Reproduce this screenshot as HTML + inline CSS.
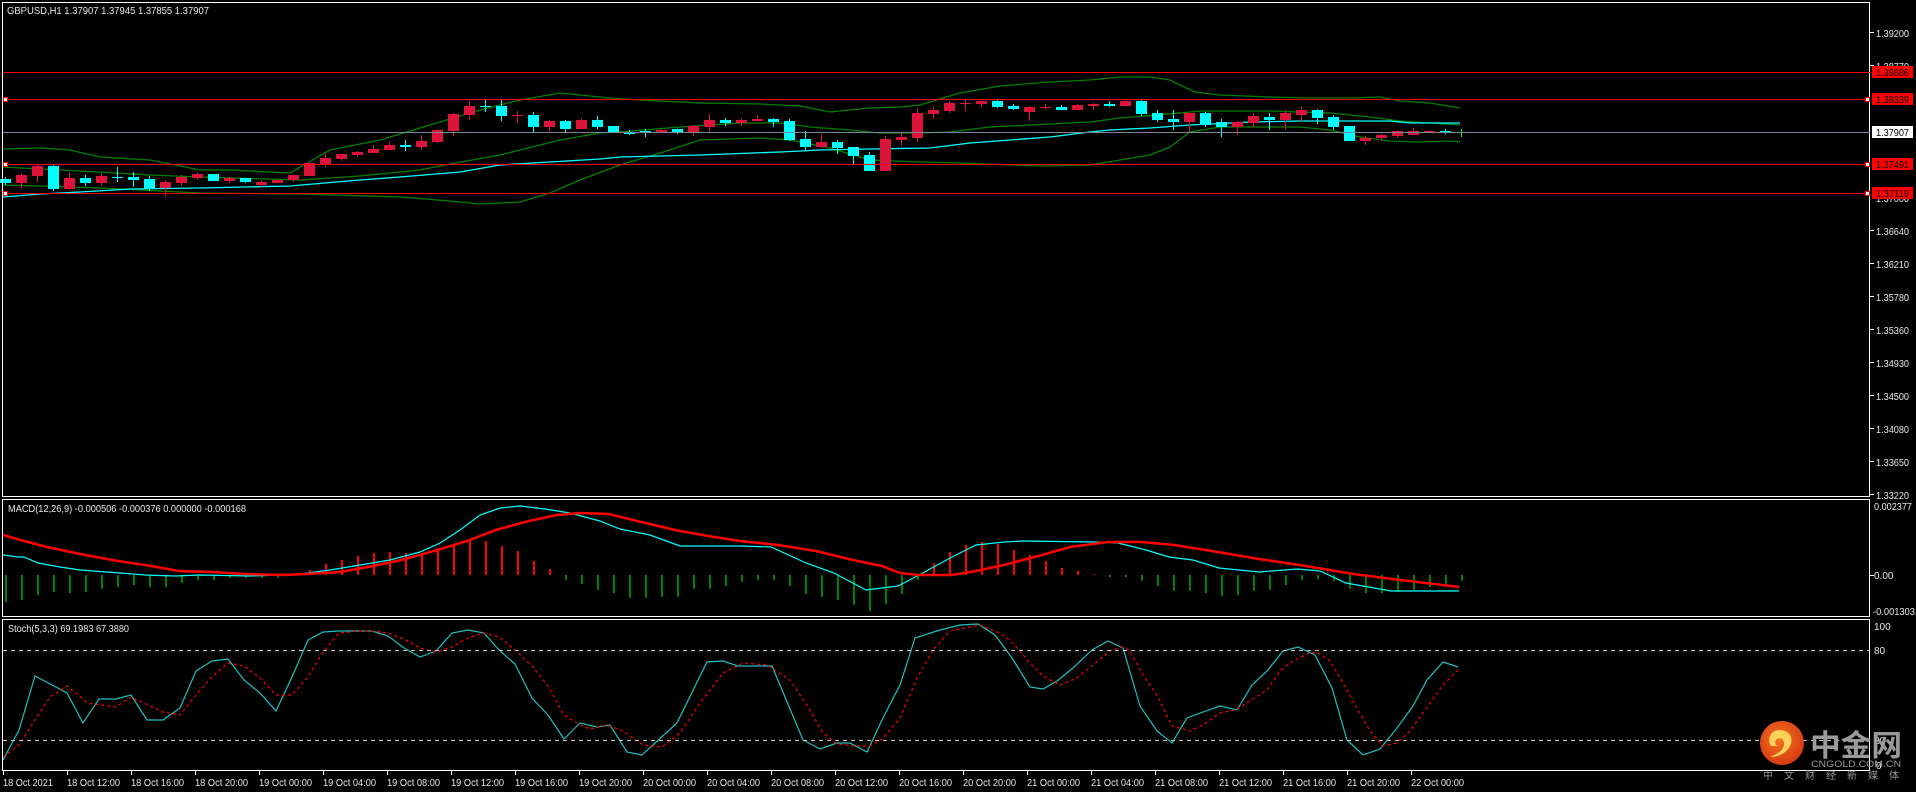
<!DOCTYPE html>
<html><head><meta charset="utf-8"><style>
html,body{margin:0;padding:0;background:#000;width:1916px;height:792px;overflow:hidden}
svg{display:block}
text{font-family:"Liberation Sans",Tahoma,sans-serif;font-size:10px;fill:#e8e8e8}
</style></head><body>
<svg id="s" width="1916" height="792" xmlns="http://www.w3.org/2000/svg">
<rect width="1916" height="792" fill="#000"/>
<g id="dyn"></g>
<g fill="none" stroke="#fff" stroke-width="1">
<rect x="2.5" y="2.5" width="1867" height="494"/>
<rect x="2.5" y="499.5" width="1867" height="117"/>
<rect x="2.5" y="619.5" width="1867" height="151"/>
</g>
<line x1="3" y1="72.5" x2="1870" y2="72.5" stroke="#ff0000"/>
<line x1="3" y1="99.5" x2="1870" y2="99.5" stroke="#ff0000"/>
<line x1="3" y1="132.5" x2="1870" y2="132.5" stroke="#778899"/>
<line x1="3" y1="164.5" x2="1870" y2="164.5" stroke="#ff0000"/>
<line x1="3" y1="193.5" x2="1870" y2="193.5" stroke="#ff0000"/>
<g fill="#fff" stroke="#ff0000"><rect x="3.5" y="97.5" width="4" height="4"/><rect x="3.5" y="162.5" width="4" height="4"/><rect x="3.5" y="191.5" width="4" height="4"/>
<rect x="1865.5" y="97.5" width="4" height="4"/><rect x="1865.5" y="162.5" width="4" height="4"/><rect x="1865.5" y="191.5" width="4" height="4"/></g>
<line x1="3" y1="650.5" x2="1870" y2="650.5" stroke="#c8c8c8" stroke-dasharray="4,4"/>
<line x1="3" y1="740.5" x2="1870" y2="740.5" stroke="#c8c8c8" stroke-dasharray="4,4"/>
<text x="7" y="14" textLength="202" lengthAdjust="spacingAndGlyphs">GBPUSD,H1  1.37907 1.37945 1.37855 1.37907</text>
<text x="8" y="512" textLength="238" lengthAdjust="spacingAndGlyphs">MACD(12,26,9) -0.000506 -0.000376 0.000000 -0.000168</text>
<text x="8" y="632" textLength="121" lengthAdjust="spacingAndGlyphs">Stoch(5,3,3) 69.1983 67.3880</text>
<g stroke="#fff"><line x1="1870" y1="32.5" x2="1874" y2="32.5"/><line x1="1870" y1="65.5" x2="1874" y2="65.5"/><line x1="1870" y1="230.5" x2="1874" y2="230.5"/><line x1="1870" y1="263.5" x2="1874" y2="263.5"/><line x1="1870" y1="296.5" x2="1874" y2="296.5"/><line x1="1870" y1="329.5" x2="1874" y2="329.5"/><line x1="1870" y1="362.5" x2="1874" y2="362.5"/><line x1="1870" y1="395.5" x2="1874" y2="395.5"/><line x1="1870" y1="428.5" x2="1874" y2="428.5"/><line x1="1870" y1="461.5" x2="1874" y2="461.5"/><line x1="1870" y1="494.5" x2="1874" y2="494.5"/><line x1="1870" y1="575.5" x2="1874" y2="575.5"/></g>
<g id="pax"></g>
<rect x="1872" y="66" width="41" height="12" fill="#ff0000"/>
<rect x="1872" y="93" width="41" height="12" fill="#ff0000"/>
<rect x="1872" y="126" width="41" height="12" fill="#fff"/>
<rect x="1872" y="158" width="41" height="12" fill="#ff0000"/>
<rect x="1872" y="187" width="41" height="12" fill="#ff0000"/>
<g id="pbox"></g>
<text x="1874" y="510" textLength="38" lengthAdjust="spacingAndGlyphs">0.002377</text><text x="1874" y="579">0.00</text><text x="1873" y="615" textLength="42" lengthAdjust="spacingAndGlyphs">-0.001303</text>
<text x="1874" y="630">100</text><text x="1874" y="654">80</text><text x="1874" y="744">20</text><text x="1876" y="769">0</text>
<g id="time"></g>
<defs><radialGradient id="lg" cx="0.45" cy="0.4" r="0.6"><stop offset="0" stop-color="#f5761e"/><stop offset="1" stop-color="#d63a14"/></radialGradient></defs>
<circle cx="1782" cy="743" r="22" fill="url(#lg)"/>
<path d="M1771 746 C1766 738 1772 729 1781 730 C1790 731 1794 739 1790 746 C1787 752 1780 757 1770 757 C1779 753 1783 750 1784 745 C1785 740 1781 737 1777 739 C1774 741 1775 745 1778 746 Z" fill="#fcd35a"/>
<text x="1810" y="756" textLength="92" lengthAdjust="spacingAndGlyphs" style="font-family:'Noto Sans CJK SC',sans-serif;font-size:30px;font-weight:bold;fill:#9a9a9a">中金网</text>
<text x="1811" y="767" textLength="90" lengthAdjust="spacingAndGlyphs" style="font-size:9px;fill:#9a9a9a">CNGOLD.COM.CN</text>
<text x="1763" y="779" textLength="136" lengthAdjust="spacing" style="font-family:'Noto Sans CJK SC',sans-serif;font-size:10px;fill:#9a9a9a">中文财经新媒体</text>
</svg>
<script>
var g=document.getElementById("dyn"),h="";
function pl(pts,col,w,extra){h+='<polyline fill="none" stroke="'+col+'" stroke-width="'+w+'" '+(extra||'')+' points="'+pts+'"/>';}
pl("3,149 40,148 70,150 100,157 150,160 200,170 230,170 290,173 330,150 380,140 430,125 480,110 520,100 560,93 610,98 640,100 700,103 760,104 800,106 830,112 870,108 900,107 920,105 940,99 960,93 1000,86 1050,82 1090,80 1120,77 1150,77 1170,80 1180,85 1195,92 1220,95 1270,97 1310,98 1350,98 1380,97 1400,101 1430,103 1460,108","#008000",1.3);
pl("3,167 40,169 80,171 150,175 200,177 300,180 360,176 420,170 450,164 500,155 560,140 600,133 620,132 680,127 740,123 780,123 810,127 850,130 880,133 920,133 950,132 990,127 1050,124 1090,122 1120,118 1180,113 1200,111 1270,111 1330,113 1370,117 1400,121 1430,123 1460,125","#008000",1.3);
pl("3,185 40,186 100,188 200,193 300,194 400,197 450,201 480,204 520,202 550,193 580,180 620,165 660,153 700,140 760,138 790,140 830,148 870,160 920,162 960,163 1040,166 1090,165 1120,160 1150,155 1170,147 1190,132 1220,127 1300,127 1330,130 1360,137 1390,141 1420,142 1450,141 1460,142","#008000",1.3);
pl("3,197 40,194 80,192 130,189 200,188 290,186 360,180 400,177 460,172 500,165 550,162 600,159 620,157 700,155 780,152 820,150 870,149 930,148 970,143 1010,140 1050,137 1090,132 1110,130 1150,128 1190,125 1250,122 1300,121 1390,121 1410,123 1460,123","#00ffff",1.3);
var C=[[179,183,'c'],[175,183,'r',173,189],[166,176,'r',164,182],[166,189,'c',164,191],[178,189,'r',172,190],[178,183,'c',175,186],[176,183,'r',173,186],[177,177,'c',167,182],[177,180,'c',172,187],[179,189,'c',176,191],[182,188,'r',180,197],[177,183,'r',175,186],[174,178,'r',172,180],[174,181,'c',174,181],[178,181,'r',177,183],[178,182,'c',178,183],[182,185,'r',180,188],[180,183,'r',180,183],[175,180,'r',175,182],[163,176,'r',163,176],[158,164,'r',153,167],[154,159,'r',154,161],[152,155,'r',151,157],[149,153,'r',145,153],[145,150,'r',142,150],[145,147,'c',140,151],[141,147,'r',135,150],[130,142,'r',129,143],[114,131,'r',113,136],[106,115,'r',101,120],[106,106,'c',99,112],[106,116,'c',100,121],[115,115,'r',111,123],[115,127,'c',112,132],[121,127,'r',120,131],[121,129,'c',120,132],[120,129,'r',118,129],[120,127,'c',116,129],[126,133,'c',126,133],[132,134,'c',130,135],[131,132,'c',129,137],[130,133,'r',129,133],[129,132,'c',129,134],[126,132,'r',125,136],[120,127,'r',114,133],[120,123,'c',118,126],[120,123,'r',118,126],[119,121,'r',115,121],[119,122,'c',118,127],[121,140,'c',119,141],[139,147,'c',131,150],[142,147,'r',134,148],[142,148,'c',140,154],[147,156,'c',147,164],[155,171,'c',152,171],[139,171,'r',136,171],[137,140,'r',132,146],[113,138,'r',108,142],[110,114,'r',107,119],[103,111,'r',101,113],[103,103,'r',100,111],[101,104,'r',99,107],[101,107,'c',100,108],[106,109,'c',104,110],[107,112,'r',106,121],[107,107,'r',104,110],[107,110,'c',105,110],[105,110,'r',104,110],[104,106,'r',103,110],[104,106,'c',101,107],[101,106,'r',100,106],[101,114,'c',100,116],[113,120,'c',110,122],[119,122,'c',110,130],[113,122,'r',113,132],[113,125,'c',112,127],[122,127,'c',119,137],[122,127,'r',121,135],[116,123,'r',113,127],[117,120,'c',113,130],[113,120,'r',110,130],[110,115,'r',107,122],[110,118,'c',109,124],[117,127,'c',115,130],[126,141,'c',126,141],[138,141,'r',136,145],[135,138,'r',134,141],[131,136,'r',130,138],[131,135,'r',128,135],[131,132,'r',130,133],[131,133,'c',129,134],[132,132,'g',129,137]];
C.forEach(function(d,i){var x=5+16*i,col=d[2]=='c'?'#00ffff':(d[2]=='r'?'#dc143c':'#00ff00');var wt=d[3]||d[0]-2,wb=d[4]||d[1]+2;
h+='<rect x="'+x+'" y="'+wt+'" width="1" height="'+(wb-wt)+'" fill="'+col+'"/>';
var ht=d[1]-d[0];if(ht<1){h+='<rect x="'+(x-5)+'" y="'+d[0]+'" width="11" height="1" fill="'+col+'"/>';}else h+='<rect x="'+(x-5)+'" y="'+d[0]+'" width="11" height="'+ht+'" fill="'+col+'"/>';});
var H=[602,600,595,592,593,592,589,587,585,587,587,583,580,580,578,578,578,578,575,570,564,560,556,553,552,553,555,551,546,541,541,546,551,561,569,580,584,590,593,598,598,597,597,589,589,586,582,580,580,586,594,597,600,605,611,604,594,580,563,552,545,542,544,550,555,561,568,571,574,577,577,581,586,591,591,593,596,595,591,590,585,580,579,581,589,593,593,592,590,587,585,581];
H.forEach(function(y,i){var x=5+16*i;if(y<575)h+='<rect x="'+x+'" y="'+y+'" width="2" height="'+(575-y)+'" fill="#ff0000"/>';else if(y>575)h+='<rect x="'+x+'" y="575" width="2" height="'+(y-575)+'" fill="#008000"/>';else h+='<rect x="'+x+'" y="574" width="2" height="2" fill="#ff0000"/>';});
pl("3,555 18,557 24,557 38,563 60,567 80,570 120,573 145,575 175,576 200,575 250,576 280,575 300,574 330,570 360,565 390,560 420,552 440,543 460,530 480,515 500,508 520,506 545,509 570,513 600,521 620,529 650,535 680,546 740,546 771,547 806,563 834,573 866,590 898,586 919,575 952,557 976,545 1004,542 1023,541 1094,542 1118,543 1146,550 1169,557 1193,560 1219,568 1259,572 1297,569 1320,571 1346,583 1363,586 1391,591 1405,591 1459,591","#00ffff",1.2);
pl("3,535 24,541 47,547 85,555 118,561 151,566 179,571 212,572 245,574 283,575 307,574 340,572 373,566 401,560 434,551 467,541 496,530 529,521 557,515 580,513 609,514 637,521 675,530 708,536 740,541 778,545 816,551 853,560 882,566 900,573 919,575 952,575 976,571 1004,565 1042,555 1070,547 1108,542 1141,542 1174,545 1212,551 1259,559 1306,566 1353,574 1401,580 1459,587","#ff0000",2.5);
pl("3,760 19,730 35,676 67,693 83,723 99,699 116,699 131,695 147,720 163,720 180,708 196,671 212,661 228,659 244,680 260,693 276,711 292,677 308,640 323,632 339,631 372,631 388,636 404,648 420,657 436,651 452,633 468,630 484,633 499,650 515,664 532,698 548,715 564,739 580,723 597,727 610,725 627,752 642,755 677,723 707,662 723,661 738,666 772,666 803,740 820,749 837,743 850,743 867,752 883,718 900,685 915,638 940,630 960,625 978,624 995,635 1012,658 1030,687 1043,689 1057,681 1073,668 1092,650 1108,641 1123,648 1140,706 1157,731 1172,743 1187,718 1203,712 1220,706 1237,710 1252,685 1267,671 1283,651 1298,647 1315,655 1332,688 1347,740 1363,755 1380,749 1397,728 1413,706 1427,680 1443,662 1458,667","#20c0c0",1.2);
pl("3,757 19,745 35,720 50,697 67,686 88,703 99,705 116,707 131,697 163,712 180,715 196,695 212,677 228,663 244,666 260,678 276,695 292,695 308,677 323,652 339,633 360,631 372,631 388,633 404,639 420,648 436,652 452,647 468,638 484,633 499,637 515,650 532,666 548,686 564,715 580,725 590,729 607,725 623,731 643,745 662,747 680,733 700,703 723,673 743,663 767,665 790,680 807,705 823,733 837,744 857,746 870,746 883,738 900,718 917,678 933,650 950,631 980,625 1000,633 1013,643 1030,663 1043,676 1060,685 1077,678 1093,665 1110,651 1123,647 1130,651 1143,675 1157,695 1172,726 1190,731 1203,725 1220,713 1235,710 1250,701 1267,690 1280,671 1293,661 1310,653 1317,652 1330,661 1343,683 1357,708 1370,731 1383,746 1397,743 1410,731 1423,713 1443,685 1458,670","#ff0000",1.2,'stroke-dasharray="3,3"');
g.innerHTML=h;
var P=[[37,"1.39200"],[70,"1.38770"],[202,"1.37000"],[235,"1.36640"],[268,"1.36210"],[301,"1.35780"],[334,"1.35360"],[367,"1.34930"],[400,"1.34500"],[433,"1.34080"],[466,"1.33650"],[499,"1.33220"]],p="";
P.forEach(function(a){p+='<text x="1876" y="'+a[0]+'" textLength="33" lengthAdjust="spacingAndGlyphs">'+a[1]+'</text>';});
document.getElementById("pax").innerHTML=p;
var B=[[76,"1.38686"],[103,"1.38339"],[136,"1.37907"],[168,"1.37491"],[197,"1.37119"]],b="";
B.forEach(function(a){b+='<text x="1876" y="'+a[0]+'" textLength="33" lengthAdjust="spacingAndGlyphs" style="fill:#000">'+a[1]+'</text>';});
document.getElementById("pbox").innerHTML=b;
var L=["18 Oct 2021","18 Oct 12:00","18 Oct 16:00","18 Oct 20:00","19 Oct 00:00","19 Oct 04:00","19 Oct 08:00","19 Oct 12:00","19 Oct 16:00","19 Oct 20:00","20 Oct 00:00","20 Oct 04:00","20 Oct 08:00","20 Oct 12:00","20 Oct 16:00","20 Oct 20:00","21 Oct 00:00","21 Oct 04:00","21 Oct 08:00","21 Oct 12:00","21 Oct 16:00","21 Oct 20:00","22 Oct 00:00"],t="";
L.forEach(function(s,k){var x=3+64*k;t+='<rect x="'+x+'" y="771" width="1" height="4" fill="#fff"/><text x="'+x+'" y="786" textLength="'+(k==0?50:53)+'" lengthAdjust="spacingAndGlyphs">'+s+'</text>';});
document.getElementById("time").innerHTML=t;
</script>
</body></html>
